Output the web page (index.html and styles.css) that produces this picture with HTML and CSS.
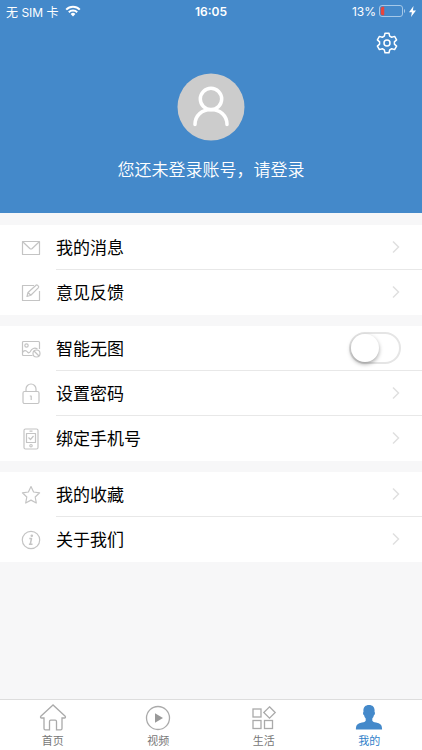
FILE: index.html
```html
<!DOCTYPE html>
<html lang="zh-CN">
<head>
    <meta charset="utf-8">
    <meta name="viewport" content="width=device-width, initial-scale=1">
    <title>我的</title>
    <link rel="stylesheet" href="styles.css">
</head>
<body>
    <!-- the blue header with the status bar and the account -->
    <header class="header">
        <div class="status">
            <div class="status-left">
                <span>无 SIM 卡</span>
                <svg width="16" height="12" viewBox="0 0 16 12" fill="none" stroke="#fff" stroke-width="2">
                    <path d="M1.2 4.6a9.6 9.6 0 0 1 13.6 0M3.8 7.2a6 6 0 0 1 8.4 0"/>
                    <path d="M8 11.5L5.6 9a3.4 3.4 0 0 1 4.8 0z" fill="#fff" stroke="none"/>
                </svg>
            </div>
            <span class="time">16:05</span>
            <div class="status-right">
                <span>13%</span>
                <svg width="27" height="12" viewBox="0 0 27 12" fill="none">
                    <rect x="0.5" y="0.5" width="23" height="11" rx="2.5" stroke="#a5c8e8"/>
                    <path d="M3.5 2H5v8H3.5A1.5 1.5 0 0 1 2 8.5v-5A1.5 1.5 0 0 1 3.5 2z" fill="#e8453c" stroke="#e8453c" stroke-width="0.5"/>
                    <path d="M25 4v4c1.5-.6 1.5-3.4 0-4z" fill="#a5c8e8"/>
                </svg>
                <svg width="7" height="11" viewBox="0 0 7 11" fill="#fff">
                    <path d="M4.5 0L0 6.2h2.9L2 11l5-6.5H3.9z"/>
                </svg>
            </div>
        </div>
        <div class="tools">
            <button class="icon-button" type="button" aria-label="设置">
                <svg width="22" height="22" viewBox="0 0 22 22" fill="none" stroke="#fff" stroke-width="1.5" stroke-linejoin="round">
                    <path d="M9 1.2h4l.7 2.9 2 1.15 2.9-.85 2 3.45-2.2 2.05v2.2l2.2 2.05-2 3.45-2.9-.85-2 1.15-.7 2.9H9l-.7-2.9-2-1.15-2.9.85-2-3.45 2.2-2.05v-2.2L1.4 7.85l2-3.45 2.9.85 2-1.15z"/>
                    <circle cx="11" cy="11" r="3"/>
                </svg>
            </button>
        </div>
        <a class="account" href="#">
            <svg width="68" height="68" viewBox="0 0 68 68" fill="none">
                <circle cx="34" cy="34" r="33.5" fill="#ccc"/>
                <g stroke="#fff" stroke-width="3.5" stroke-linecap="round">
                    <circle cx="34" cy="26" r="10.7"/>
                    <path d="M18 51.5c0-9 7-15 16-15s16 6 16 15"/>
                </g>
            </svg>
            <span>您还未登录账号，请登录</span>
        </a>
    </header>

    <!-- the menu groups -->
    <main class="menu">
        <nav class="group">
            <a class="row" href="#">
                <svg class="row-icon" viewBox="0 0 20 22">
                    <rect x="1.5" y="4.5" width="17" height="13"/>
                    <path d="M2 5l6.8 6.5q1.2 1 2.4 0L18 5"/>
                </svg>
                <span class="row-body">我的消息
                    <svg class="arrow" viewBox="0 0 8 14"><path d="M1 1.5L6.5 7 1 12.5"/></svg>
                </span>
            </a>
            <a class="row" href="#">
                <svg class="row-icon" viewBox="0 0 20 22">
                    <path d="M13 3.5H1.5v15h17V9"/>
                    <path d="M6 14.5l1-4L15 3.2c1-.9 3.4 1.3 2.5 2.4L9.8 13.2zM7 10.5l2.8 2.7"/>
                </svg>
                <span class="row-body">意见反馈
                    <svg class="arrow" viewBox="0 0 8 14"><path d="M1 1.5L6.5 7 1 12.5"/></svg>
                </span>
            </a>
        </nav>

        <div class="group">
            <div class="row">
                <svg class="row-icon" viewBox="0 0 20 22">
                    <path d="M11.5 17.5h-9a1 1 0 0 1-1-1v-12a1 1 0 0 1 1-1h15a1 1 0 0 1 1 1V11"/>
                    <circle cx="5.5" cy="7.5" r="1.7"/>
                    <path d="M1.5 14.5c1.5-2.5 3.5-2.5 5-.5 1 1.2 2 1 2.8-.5 1.4-3 4.2-4.3 7.2-2.5"/>
                    <circle cx="15.5" cy="15.5" r="3.5"/>
                    <path d="M13 13l5 5"/>
                </svg>
                <span class="row-body">
                    <label for="no-image">智能无图</label>
                    <input class="switch" type="checkbox" role="switch" id="no-image">
                </span>
            </div>
            <a class="row" href="#">
                <svg class="row-icon" viewBox="0 0 20 22">
                    <rect x="2" y="8.5" width="16" height="12" rx="1.5"/>
                    <path d="M5 8.5V6a5 5 0 0 1 10 0v2.5M8.8 13h1.4v4"/>
                </svg>
                <span class="row-body">设置密码
                    <svg class="arrow" viewBox="0 0 8 14"><path d="M1 1.5L6.5 7 1 12.5"/></svg>
                </span>
            </a>
            <a class="row" href="#">
                <svg class="row-icon" viewBox="0 0 20 22">
                    <rect x="3" y="1" width="14" height="20" rx="1.5"/>
                    <rect x="5.5" y="5.5" width="9" height="9"/>
                    <path d="M7.5 9.5l2 2 3-3.5M8.5 3.2h3"/>
                    <circle cx="10" cy="17.7" r="1.2"/>
                </svg>
                <span class="row-body">绑定手机号
                    <svg class="arrow" viewBox="0 0 8 14"><path d="M1 1.5L6.5 7 1 12.5"/></svg>
                </span>
            </a>
        </div>

        <nav class="group">
            <a class="row" href="#">
                <svg class="row-icon" viewBox="0 0 20 22">
                    <path d="M10 2.5l2.6 5.5 6 .8-4.4 4.2 1.1 6-5.3-2.9L4.7 19l1.1-6-4.4-4.2 6-.8z"/>
                </svg>
                <span class="row-body">我的收藏
                    <svg class="arrow" viewBox="0 0 8 14"><path d="M1 1.5L6.5 7 1 12.5"/></svg>
                </span>
            </a>
            <a class="row" href="#">
                <svg class="row-icon" viewBox="0 0 20 22">
                    <circle cx="10" cy="11" r="8.7"/>
                    <circle cx="10.8" cy="6.8" r="0.7"/>
                    <path d="M8.3 9.5h2.2L9.3 15.2h2.2M7.9 15.2h1.4" stroke-width="1.5"/>
                </svg>
                <span class="row-body">关于我们
                    <svg class="arrow" viewBox="0 0 8 14"><path d="M1 1.5L6.5 7 1 12.5"/></svg>
                </span>
            </a>
        </nav>
    </main>

    <!-- the tab bar -->
    <nav class="tabs">
        <a class="tab" href="#">
            <svg class="tab-icon" viewBox="0 0 28 28">
                <path d="M14 2L1.8 13.3c-.6.7-.2 1.7.8 1.7H5v10.5c0 .8.5 1.3 1.3 1.3h4.2v-8.3c0-.9.5-1.4 1.3-1.4h4.4c.8 0 1.3.5 1.3 1.4v8.3h4.2c.8 0 1.3-.5 1.3-1.3V15h2.4c1 0 1.4-1 .8-1.7z"/>
            </svg>
            首页
        </a>
        <a class="tab" href="#">
            <svg class="tab-icon" viewBox="0 0 28 28">
                <circle cx="14" cy="15" r="11.5"/>
                <path d="M11 10.2v9.6l8-4.8z" fill="#999" stroke="none"/>
            </svg>
            视频
        </a>
        <a class="tab" href="#">
            <svg class="tab-icon" viewBox="0 0 28 28">
                <rect x="3" y="6" width="8" height="8"/>
                <rect x="3" y="17.5" width="8" height="8"/>
                <rect x="14.5" y="17.5" width="8" height="8"/>
                <path d="M19.5 3.8l5.7 5.7-5.7 5.7-5.7-5.7z"/>
            </svg>
            生活
        </a>
        <a class="tab active" href="#" aria-current="page">
            <svg class="tab-icon" viewBox="0 0 28 28">
                <path d="M14 2c3.6 0 5.6 2.2 5.6 5.500 0 .5 0 1-.1 1.400.9.300.5 2.900-.6 3.400-.3 1.500-.9 2.500-1.600 3.200v2.200c1 1.500 3 1.500 5.500 2.300 2.500.9 4.300 1.700 4.300 6.500H.9c0-4.800 1.800-5.600 4.300-6.500 2.500-.8 4.500-.8 5.500-2.300v-2.200c-.7-.7-1.300-1.700-1.600-3.200-1.100-.5-1.500-3.100-.6-3.400-.1-.4-.1-.9-.1-1.400C8.400 4.200 10.400 2 14 2z" fill="#4489ca" stroke="none"/>
            </svg>
            我的
        </a>
    </nav>
</body>
</html>
```
FILE: styles.css
```css
/* Set up the page as one column with the tab bar at the bottom */
body {
    display: flex;
    flex-direction: column;
    min-height: 100vh;
    margin: 0;
    background-color: #f7f7f8;
    color: #000;
    font-family: "Liberation Sans", "Noto Sans CJK SC", sans-serif;
    font-size: 17px;
}
a {
    color: inherit;
    text-decoration: none;
}
svg {
    display: block;
    flex-shrink: 0;
}

/* Set up the style for the header */
.header {
    background-color: #4489ca;
    color: #fff;
    padding-bottom: 28px;
}
.status {
    display: grid;
    grid-template-columns: 1fr auto 1fr;
    align-items: center;
    height: 22px;
    padding: 0 6px;
    font-family: Inter, "Noto Sans CJK SC", sans-serif;
    font-size: 12px;
}
.status-left, .status-right {
    display: flex;
    align-items: center;
    gap: 6px;
}
.status-right {
    justify-content: flex-end;
    gap: 3px;
}
.time {
    font-weight: 600;
}
.tools {
    display: flex;
    justify-content: flex-end;
    padding: 10px 24px 0;
}
.icon-button {
    padding: 0;
    border: none;
    background: none;
}
.account {
    display: flex;
    flex-direction: column;
    align-items: center;
    gap: 16px;
    margin-top: 19px;
    font-weight: 350;
    line-height: 28px;
}

/* Set up the style for the menu groups and their rows */
.menu {
    display: flex;
    flex: 1;
    flex-direction: column;
    gap: 11px;
    padding: 12px 0;
}
.group {
    background-color: #fff;
}
.row {
    display: flex;
    align-items: center;
    gap: 15px;
    height: 45px;
    padding-left: 21px;
}
.row-icon {
    width: 20px;
    height: 22px;
    fill: none;
    stroke: #c4c4c4;
    stroke-width: 1.2;
    stroke-linejoin: round;
}
.row-body {
    display: flex;
    flex: 1;
    align-items: center;
    justify-content: space-between;
    box-sizing: border-box;
    height: 45px;
    padding-right: 21px;
    padding-bottom: 1px;
    border-bottom: 1px solid #e8e8e8;
}
.row:last-child .row-body {
    border-bottom-color: transparent;
}
.arrow {
    width: 8px;
    height: 14px;
    margin-right: 1px;
    fill: none;
    stroke: #e0e0e0;
    stroke-width: 1.5;
}

/* Set up the style for the switch */
.switch {
    appearance: none;
    box-sizing: border-box;
    width: 52px;
    height: 32px;
    margin: 0;
    border: 2px solid #e5e5e5;
    border-radius: 16px;
    background-color: #fff;
}
.switch::before {
    content: "";
    display: block;
    width: 28px;
    height: 28px;
    border-radius: 50%;
    background-color: #fff;
    box-shadow: 0 2px 4px rgba(0, 0, 0, 0.35);
}
.switch:checked {
    background-color: #4489ca;
}
.switch:checked::before {
    margin-left: 20px;
}

/* Set up the style for the tab bar */
.tabs {
    display: flex;
    border-top: 1px solid #ddd;
    background-color: #fff;
    color: #777;
    font-size: 11px;
    line-height: 16px;
}
.tab {
    display: flex;
    flex: 1;
    flex-direction: column;
    align-items: center;
    gap: 2px;
    padding: 3px 0 1px;
}
.tab-icon {
    width: 28px;
    height: 28px;
    fill: none;
    stroke: #aaa;
    stroke-width: 1.3;
}
.active {
    color: #2f7fc9;
}
```
